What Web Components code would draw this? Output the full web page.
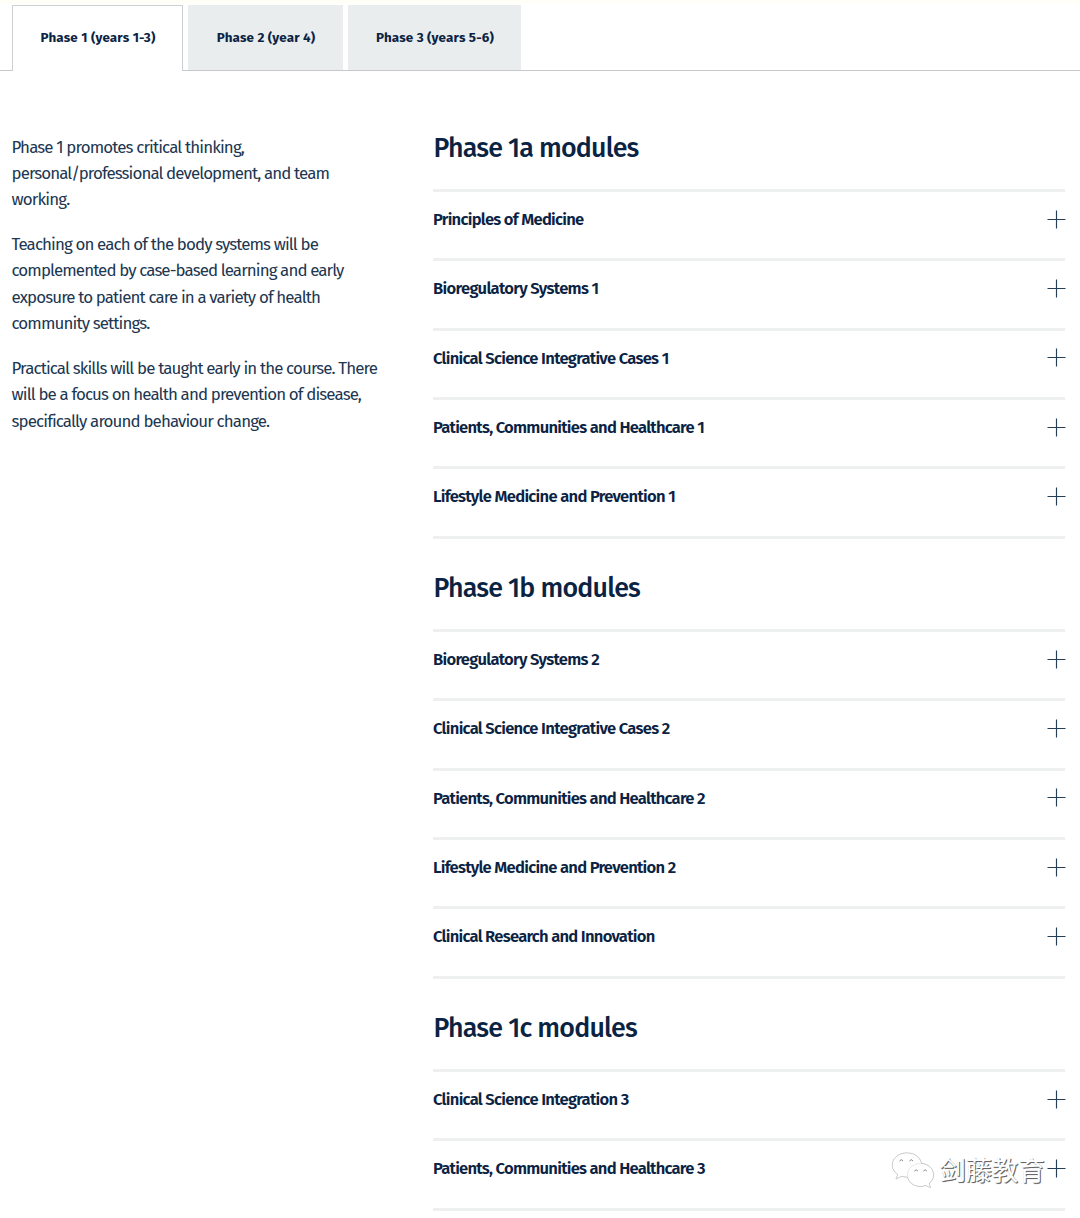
<!DOCTYPE html>
<html lang="en">
<head>
<meta charset="utf-8">
<title>Phase 1 modules</title>
<style>
body { margin: 0; background: #fff; color: #0b2343; font-family: "Fira Sans", "Noto Sans", sans-serif; }
</style>
</head>
<body>
<course-page></course-page>
<script>
// One line of text, tracked to the measure given in its "measure" attribute.
class FitLine extends HTMLElement {
  connectedCallback() {
    const root = this.attachShadow({ mode: "open" });
    root.innerHTML = `<style>
      :host { display: block; white-space: nowrap; width: max-content; }
      span { display: inline-block; }
    </style><span><slot></slot></span>`;
    const span = root.querySelector("span");
    const wanted = parseFloat(this.getAttribute("measure"));
    const natural = span.getBoundingClientRect().width;
    if (wanted && natural) {
      span.style.letterSpacing = (wanted - natural) / this.textContent.length + "px";
    }
  }
}

class PhaseTab extends HTMLElement {
  connectedCallback() {
    this.attachShadow({ mode: "open" }).innerHTML = `<style>
      :host { box-sizing: border-box; display: flex; justify-content: center; height: 65px; padding: 22px 0 0 1px;
        background: #e9edee; font-size: 13.4px; line-height: 21px; font-weight: 700; color: #0b2343; }
      :host([active]) { height: 66px; padding-top: 21px; background: #fff; border: 1px solid #ccd0d2; border-bottom: 0; }
    </style><slot></slot>`;
  }
}

class PhaseTabs extends HTMLElement {
  connectedCallback() {
    this.attachShadow({ mode: "open" }).innerHTML = `<style>
      :host { box-sizing: border-box; display: flex; gap: 5px; align-items: flex-start; height: 71px; padding: 5px 0 0 12px;
        border-bottom: 1px solid #c6c8c9; background: linear-gradient(#fffff8 0 3px, #fff 4px); }
      ::slotted([active]) { margin-bottom: -1px; }
    </style><slot></slot>`;
  }
}

class ModuleRow extends HTMLElement {
  connectedCallback() {
    this.attachShadow({ mode: "open" }).innerHTML = `<style>
      :host { box-sizing: border-box; display: flex; justify-content: space-between; align-items: flex-start; height: 69.35px; padding-top: 16px;
        border-top: 3px solid #eeefef; font-size: 16.6px; line-height: 22px; font-weight: 600; }
      svg { display: block; width: 19px; height: 19px; flex: none; margin: 1.7px -1px 0 0; }
    </style><slot></slot>
    <svg viewBox="0 0 19 19"><path d="M9.500 .5V18.500M.5 9.500H18.500" fill="none" stroke="#243f58" stroke-width="1.15"/></svg>`;
  }
}

class ModuleGroup extends HTMLElement {
  connectedCallback() {
    this.attachShadow({ mode: "open" }).innerHTML = `<style>
      :host { display: block; }
      h2 { box-sizing: border-box; margin: 0; height: 90.35px; padding: 31.5px 0 0 .5px; font-size: 26.8px; line-height: 36px; font-weight: 500; }
      .rows { border-bottom: 3px solid #eeefef; }
    </style><h2><slot name="title"></slot></h2><div class="rows"><slot></slot></div>`;
  }
}

class WatermarkLogo extends HTMLElement {
  connectedCallback() {
    this.attachShadow({ mode: "open" }).innerHTML = `<style>
      :host { position: absolute; left: 891px; top: 1150px; display: flex; gap: 5.5px; align-items: flex-start;
        font: 400 26.3px/37px "Noto Sans CJK SC", sans-serif; color: #fff; }
      svg { width: 43px; height: 40px; filter: drop-shadow(.5px .7px .3px #888); }
      span { text-shadow: 1px 1px .6px #666, .5px 1px 1px #888; }
    </style>
    <svg viewBox="0 0 43 40" fill="#fff" stroke="#ccc" stroke-width=".5">
      <path d="M16 3C7.500 3 1.300 8.500 1.300 15c0 4 2.100 7.200 5.500 9.500L5 29l5.500-2.800c2 .6 4 .8 6 .8C25 27 30.500 21.500 30.500 15S24.500 3 16 3Z"/>
      <path d="M29.500 13.500C22 13.500 16.500 18.500 16.500 25s5.500 11.300 13 11.300c2 0 3.800-.4 5.300-1l4.500 2.200-1.200-4.200c2.700-2 4.400-5 4.400-8.300 0-6.500-5.500-11.500-13-11.500Z"/>
      <path d="M8.500 11q1.800-2.700 3.500 0M18.500 11q1.800-2.700 3.500 0M23.500 21q1.700-2.300 3.300 0M32.500 21q1.700-2.300 3.300 0" fill="none" stroke="#777" stroke-width=".9"/>
    </svg><span>剑藤教育</span>`;
  }
}

const groups = [
  ["Phase 1a modules", 205, [["Principles of Medicine", 150.5], ["Bioregulatory Systems 1", 165.5], ["Clinical Science Integrative Cases 1", 235.5], ["Patients, Communities and Healthcare 1", 271], ["Lifestyle Medicine and Prevention 1", 242]]],
  ["Phase 1b modules", 206.5, [["Bioregulatory Systems 2", 166], ["Clinical Science Integrative Cases 2", 236.5], ["Patients, Communities and Healthcare 2", 271.7], ["Lifestyle Medicine and Prevention 2", 242.5], ["Clinical Research and Innovation", 221.5]]],
  ["Phase 1c modules", 203.5, [["Clinical Science Integration 3", 195.5], ["Patients, Communities and Healthcare 3", 271.7]]]
];
const paragraphs = [
  [["Phase 1 promotes critical thinking,", 232.5], ["personal/professional development, and team", 317.5], ["working.", 58]],
  [["Teaching on each of the body systems will be", 306.5], ["complemented by case-based learning and early", 332], ["exposure to patient care in a variety of health", 308.5], ["community settings.", 138]],
  [["Practical skills will be taught early in the course. There", 365.5], ["will be a focus on health and prevention of disease,", 349.5], ["specifically around behaviour change.", 257]]
];
const line = ([text, measure]) => `<fit-line measure="${measure}">${text}</fit-line>`;

class CoursePage extends HTMLElement {
  connectedCallback() {
    this.attachShadow({ mode: "open" }).innerHTML = `<style>
      :host { display: block; position: relative; height: 1218px; overflow: hidden; }
      main { display: flex; padding: 27.65px 15px 0 11.5px; }
      .intro { flex: 0 0 421.5px; padding-top: 34.9px; font-size: 16.9px; line-height: 26.2px; color: #203651; }
      .intro p { margin: 0 0 19.2px; }
      .intro fit-line { height: 26.2px; }
      .modules { flex: 1; }
    </style>
    <phase-tabs>
      <phase-tab active style="width:171px">${line(["Phase 1 (years 1-3)", 115])}</phase-tab>
      <phase-tab style="width:155px">${line(["Phase 2 (year 4)", 98.5])}</phase-tab>
      <phase-tab style="width:173px">${line(["Phase 3 (years 5-6)", 118])}</phase-tab>
    </phase-tabs>
    <main>
      <div class="intro">${paragraphs.map(p => `<p>${p.map(line).join("")}</p>`).join("")}</div>
      <div class="modules">${groups.map(([title, measure, rows]) =>
        `<module-group><fit-line slot="title" measure="${measure}">${title}</fit-line>${rows.map(r => `<module-row>${line(r)}</module-row>`).join("")}</module-group>`).join("")}</div>
    </main>
    <watermark-logo></watermark-logo>`;
  }
}

customElements.define("phase-tab", PhaseTab);
customElements.define("phase-tabs", PhaseTabs);
customElements.define("module-row", ModuleRow);
customElements.define("module-group", ModuleGroup);
customElements.define("watermark-logo", WatermarkLogo);
customElements.define("course-page", CoursePage);
customElements.define("fit-line", FitLine);
</script>
</body>
</html>
